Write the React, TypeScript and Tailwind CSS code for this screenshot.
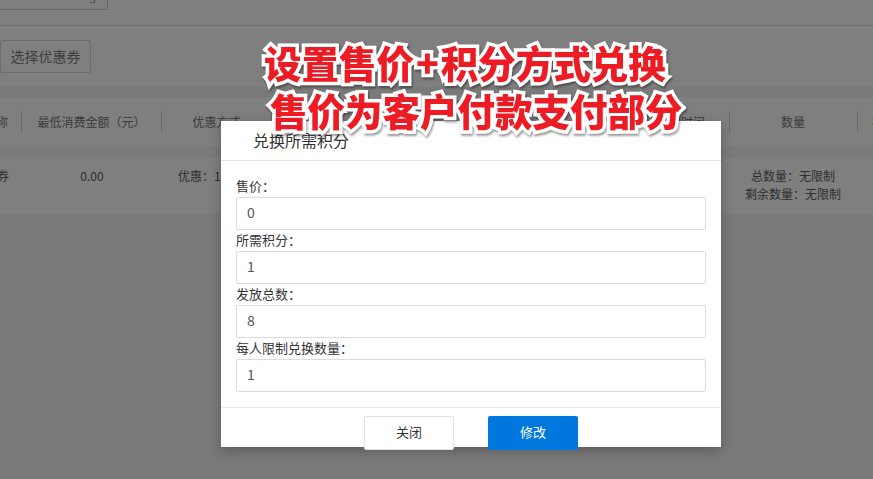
const font = { fontFamily: '"Noto Sans CJK SC", "Liberation Sans", sans-serif' };

function Field({ label, value }: { label: string; value: string }) {
  return (
    <div>
      <div className="h-[21px] text-[13px] leading-[19px] text-[#333]">{label}</div>
      <div className="flex h-[33px] items-center rounded-[2px] border border-[#dcdcdc] bg-white px-[10px] pb-[2px] text-[14px] text-[#555]">
        {value}
      </div>
    </div>
  );
}

export default function App() {
  return (
    <div className="relative h-[479px] w-[873px] overflow-hidden bg-[#7a7a7a] text-[12px] text-[#3a3a3a]" style={font}>
      <div className="h-[26px] border-b border-[#6f6f6f] bg-[#7f7f7f]">
        <div className="relative h-[10px] w-[108px] rounded-b-[2px] border-r border-b border-[#666]">
          <div className="absolute top-0 right-[12px] h-[3px] w-[5px] border-r border-b border-[#555]" />
        </div>
      </div>
      <div className="flex h-[61px] items-start bg-[#7f7f7f] pt-[14px]">
        <div className="flex h-[33px] w-[91px] items-center justify-center rounded-[2px] border border-[#6c6c6c] text-[14px] text-[#3e3e3e]">
          选择优惠券
        </div>
      </div>
      <div className="h-[10px]" />
      <div className="flex h-[50px] items-center bg-[#7f7f7f] text-[#3a3a3a]">
        <div className="flex h-[22px] w-[22px] items-center justify-end overflow-hidden border-r border-[#6a6a6a] pr-[13px]">
          <span className="shrink-0">名称</span>
        </div>
        <div className="flex h-[22px] w-[140px] items-center justify-center border-r border-[#6a6a6a]">最低消费金额（元）</div>
        <div className="flex h-[22px] w-[110px] items-center justify-center border-r border-[#6a6a6a]">优惠方式</div>
        <div className="flex h-[22px] w-[458px] items-center justify-end border-r border-[#6a6a6a] pr-[24px]">领取时间</div>
        <div className="flex h-[22px] w-[128px] items-center justify-center border-r border-[#6a6a6a] pr-[1px]">数量</div>
        <div className="flex h-[22px] flex-1 items-center overflow-hidden pl-[14px]"><span className="shrink-0">状态</span></div>
      </div>
      <div className="h-[10px]" />
      <div className="flex h-[56px] items-start bg-[#7f7f7f] pt-[10px] leading-[18px] text-[#2e2e2e]">
        <div className="flex w-[22px] justify-end overflow-hidden pr-[13px]">
          <span className="shrink-0">代金券</span>
        </div>
        <div className="w-[140px] text-center">0.00</div>
        <div className="w-[110px] text-center">优惠：10.00元</div>
        <div className="w-[458px]" />
        <div className="w-[128px] pr-[2px] text-center">
          <div>总数量：无限制</div>
          <div>剩余数量：无限制</div>
        </div>
      </div>

      <div className="absolute top-[121px] left-[221px] h-[326px] w-[500px] bg-white shadow-[0_4px_12px_rgba(0,0,0,0.25)]">
        <div className="flex h-[40px] items-center border-b border-[#e2e2ea] pb-[2px] pl-[32px] text-[16px] text-[#333]">
          兑换所需积分
        </div>
        <div className="flex flex-col px-[15px] pt-[15px]">
          <Field label="售价：" value="0" />
          <Field label="所需积分：" value="1" />
          <Field label="发放总数：" value="8" />
          <Field label="每人限制兑换数量：" value="1" />
        </div>
        <div className="mt-[15px] flex justify-center gap-[34px] border-t border-[#e8e8e8] pt-[8px]">
          <div className="flex h-[34px] w-[90px] items-center justify-center rounded-[2px] border border-[#e0e0e8] bg-white pb-[2px] text-[13px] text-[#333]">
            关闭
          </div>
          <div className="flex h-[34px] w-[90px] items-center justify-center rounded-[2px] bg-[#0077dd] pb-[2px] text-[13px] text-white">
            修改
          </div>
        </div>
      </div>

      <div className="absolute top-[38px] left-[264px] whitespace-nowrap text-[37.5px] leading-[48px] font-black text-[#ed1c24] [paint-order:stroke_fill] [-webkit-text-stroke:7px_white] [filter:drop-shadow(1px_2px_1px_rgba(0,0,0,0.4))]">
        <div>设置售价<span className="px-[2px]">+</span>积分方式兑换</div>
        <div className="pl-[6px]">售价为客户付款支付部分</div>
      </div>
    </div>
  );
}
